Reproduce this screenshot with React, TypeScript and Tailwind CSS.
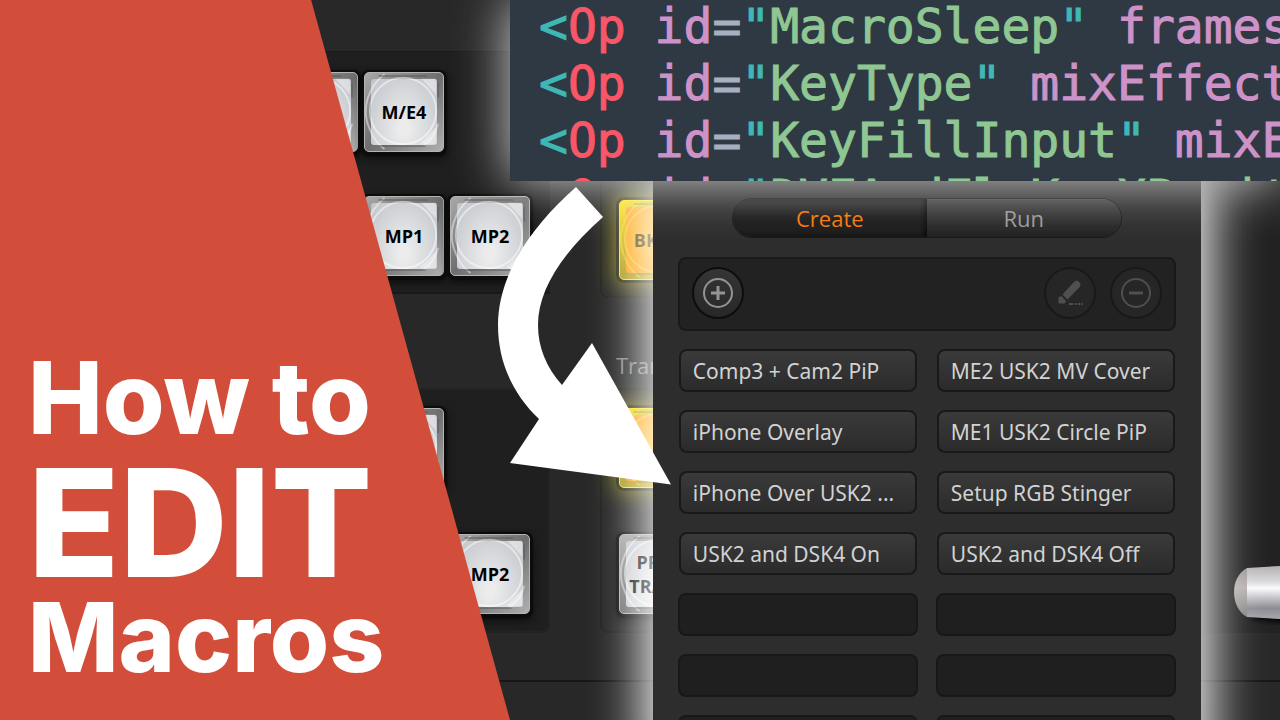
import { Minus, Plus } from "lucide-react";
import type { ReactNode } from "react";

type Token = { text: string; kind: "bracket" | "tag" | "attr" | "equals" | "value" };

const op = (value: string, attr: string): Token[] => [
  { text: "<", kind: "bracket" },
  { text: "Op", kind: "tag" },
  { text: " id", kind: "attr" },
  { text: "=", kind: "equals" },
  { text: '"', kind: "bracket" },
  { text: value, kind: "value" },
  ...(attr
    ? [
        { text: '"', kind: "bracket" as const },
        { text: ` ${attr}`, kind: "attr" as const },
      ]
    : []),
];

const codeLines = [
  op("MacroSleep", "frames"),
  op("KeyType", "mixEffect"),
  op("KeyFillInput", "mixE"),
  op("DVEAndFlyKeyXPosit", ""),
];

const tokenColors = {
  bracket: "text-[#3fb8b5]",
  tag: "text-[#f95668]",
  attr: "text-[#cd93c9]",
  equals: "text-[#a6b0c0]",
  value: "text-[#8fc793]",
};

const macros = [
  "Comp3 + Cam2 PiP",
  "ME2 USK2 MV Cover",
  "iPhone Overlay",
  "ME1 USK2 Circle PiP",
  "iPhone Over USK2 ...",
  "Setup RGB Stinger",
  "USK2 and DSK4 On",
  "USK2 and DSK4 Off",
];

const emptySlots = [1, 2, 3, 4, 5, 6];

function KeyCap({ children, lit = false }: { children?: ReactNode; lit?: boolean }) {
  const frame = lit
    ? "border-[#ffe600] bg-linear-to-br from-[#ffe000] via-[#a89a1e] to-[#ffd400] shadow-[0_0_0_3px_#33301a,0_0_20px_6px_rgba(170,165,20,0.6)]"
    : "border-[#b4b4b4] bg-linear-to-br from-[#a9a9a9] via-[#6e6e6e] to-[#b0b0b0] shadow-[0_1px_1px_3px_#0c0c0c,0_4px_8px_2px_#0c0c0c]";
  const face = lit
    ? "bg-radial from-[#ffc62e] to-[#ff9d14] text-black/70"
    : "bg-radial-[at_50%_75%] from-[#ececed] from-10% to-[#bfc3c8] text-black";

  return (
    <button className={`relative h-20 w-20 shrink-0 rounded-[5px] border p-1.5 ${frame}`}>
      <span
        className={`flex h-full w-full items-center justify-center rounded-[3px] text-lg leading-6 font-bold ${face}`}
      >
        {children}
      </span>
      <svg
        viewBox="0 0 80 80"
        className="pointer-events-none absolute inset-0 h-full w-full"
        fill="none"
        stroke={lit ? "#ffe24a" : "#ffffff"}
      >
        <path
          d="M56 73h17V56zM58 6h15v16z"
          fill={lit ? "#ffd84a" : "#fff"}
          fillOpacity="0.4"
          stroke="none"
        />
        <circle cx="39" cy="39" r="34" strokeWidth="2" strokeOpacity="0.5" />
        <path d="M20 1C4 14-5 36 5 58c3 8 8 15 15 20" strokeWidth="2" strokeOpacity="0.45" />
        <path d="M75 52c-2 9-7 17-15 22" strokeWidth="2" strokeOpacity="0.4" />
        <path
          d="M75 10v15M14 3h50M14 75h48"
          stroke={lit ? "#8c8420" : "#555555"}
          strokeWidth="2"
          strokeOpacity="0.5"
        />
      </svg>
    </button>
  );
}

function SwitcherPanel() {
  return (
    <div className="flex flex-col bg-[#282828] [grid-area:1/1]">
      <div className="h-13 shrink-0 border-b border-[#191919]" />
      <div className="flex shrink-0 gap-[50px]">
        <div className="w-[550px] shrink-0">
          <div className="grid grid-cols-[80px_80px_80px] justify-end gap-x-1.5 gap-y-11 border-b-2 border-[#191919] bg-[#1f1f1f] px-5 pt-5 pb-4">
            <KeyCap>M/E3</KeyCap>
            <KeyCap>M/E4</KeyCap>
            <span />
            <span />
            <KeyCap>MP1</KeyCap>
            <KeyCap>MP2</KeyCap>
          </div>
          <div className="h-[94px]" />
          <div className="grid grid-cols-[80px_80px] justify-end gap-x-1.5 gap-y-[46px] rounded-b-lg border-2 border-[#232323] bg-[#1f1f1f] px-[18px] pt-[18px] pb-[17px]">
            <KeyCap />
            <span />
            <KeyCap />
            <KeyCap>MP2</KeyCap>
          </div>
        </div>

        <div className="w-[250px] shrink-0">
          <div className="flex h-[246px] items-end rounded-b-lg border-2 border-[#212121] bg-[#262626] px-[17px] pb-4">
            <KeyCap lit>BKGD</KeyCap>
          </div>
          <div className="flex h-[90px] items-end px-4 pb-2 text-[22px] leading-[30px] text-[#858585]">
            Transition
          </div>
          <div className="flex flex-col gap-[46px] rounded-lg border-2 border-[#212121] bg-[#262626] px-[17px] pt-[18px] pb-[17px]">
            <KeyCap lit />
            <KeyCap>
              PREV
              <br />
              TRANS
            </KeyCap>
          </div>
        </div>

        <div className="flex flex-1 items-end justify-end bg-[#222222] pb-2">
          <svg width="46" height="64" viewBox="0 0 46 64">
            <defs>
              <linearGradient id="lever" x1="0" y1="0" x2="0" y2="1">
                <stop offset="0" stopColor="#b4b0b3" />
                <stop offset="0.3" stopColor="#dcdadd" />
                <stop offset="0.42" stopColor="#fbfbfc" />
                <stop offset="0.6" stopColor="#c5c4c9" />
                <stop offset="0.8" stopColor="#8d8c92" />
                <stop offset="1" stopColor="#a8a7ae" />
              </linearGradient>
              <linearGradient id="lever-tip" x1="0" y1="0" x2="0" y2="1">
                <stop offset="0" stopColor="#9d9998" />
                <stop offset="0.4" stopColor="#b8b3b2" />
                <stop offset="1" stopColor="#858282" />
              </linearGradient>
              <filter id="lever-shadow" x="-50%" y="-50%" width="200%" height="200%">
                <feGaussianBlur stdDeviation="3" />
              </filter>
            </defs>
            <path d="M16 20h40v42l-38-4z" fill="#000" filter="url(#lever-shadow)" />
            <path d="M13 7l33-2v53l-33-2z" fill="url(#lever)" />
            <path d="M13 7C4 12 0 21 0 31s4 20 13 25z" fill="url(#lever-tip)" />
          </svg>
        </div>
      </div>
      <div className="h-[49px] shrink-0 border-b-2 border-[#161616]" />
    </div>
  );
}

function RoundButton({
  label,
  disabled = false,
  children,
}: {
  label: string;
  disabled?: boolean;
  children: ReactNode;
}) {
  return (
    <button
      aria-label={label}
      disabled={disabled}
      className={`flex h-[52px] w-[52px] items-center justify-center rounded-full border-2 ${
        disabled
          ? "border-[#191919] bg-[#262626] text-[#4f4f4f]"
          : "border-[#0d0d0d] bg-linear-to-b from-[#353535] to-[#282828] text-[#949494]"
      }`}
    >
      {children}
    </button>
  );
}

function MacrosPanel() {
  return (
    <section className="ml-[51%] w-[548px] flex-1 bg-[#2d2d2d] px-[25px] pt-[17px] shadow-[0_0_48px_10px_rgba(255,255,255,0.95)]">
      <div className="mx-auto flex h-10 w-[390px] overflow-hidden rounded-full border border-[#161616] text-[22px] leading-[30px]">
        <button className="flex-1 bg-linear-to-b from-[#2b2b2b] via-[#191919] to-[#1c1c1c] text-[#f57608] shadow-[inset_-3px_0_5px_#0c0c0c]">
          Create
        </button>
        <button className="flex-1 border-t border-[#454545] bg-linear-to-b from-[#3d3d3d] to-[#202020] pb-0.5 text-[#999999]">
          Run
        </button>
      </div>

      <div className="mt-[19px] flex h-[74px] items-center gap-3.5 rounded-lg border-2 border-[#191919] bg-[#222222] px-3 pb-0.5">
        <RoundButton label="Add macro">
          <span className="flex h-[30px] w-[30px] items-center justify-center rounded-full border-2 border-current">
            <Plus size={24} strokeWidth={3} strokeLinecap="butt" />
          </span>
        </RoundButton>
        <div className="flex-1" />
        <RoundButton label="Edit macro" disabled>
          <svg width="26" height="26" viewBox="0 0 26 26" fill="currentColor">
            <path d="M5.500 14.500L17 2a3.800 3.800 0 0 1 5.500 5.200L10.500 19.500z" />
            <path d="M4.300 16L9 21 7.600 23.500H1.500v-6z" />
            <path d="M12 23h4v2h-4zM17.500 23h2v2h-2zM21 23h2v2h-2zM24 23h1.500v2H24z" />
          </svg>
        </RoundButton>
        <RoundButton label="Delete macro" disabled>
          <span className="flex h-[30px] w-[30px] items-center justify-center rounded-full border-2 border-current">
            <Minus size={24} strokeWidth={3} strokeLinecap="butt" />
          </span>
        </RoundButton>
      </div>

      <div className="mt-[18px] grid grid-cols-2 gap-[18px]">
        {macros.map((macro) => (
          <div key={macro} className="h-[43px] px-px">
            <button className="h-full w-full rounded-lg border-2 border-[#191919] bg-linear-to-b from-[#3a3a3a] to-[#2b2b2b] px-3 text-left font-['Noto_Sans',sans-serif] text-[21px] leading-[30px] whitespace-nowrap text-[#d2d2d2]">
              {macro}
            </button>
          </div>
        ))}
        {emptySlots.map((slot) => (
          <div key={slot} className="h-[43px] rounded-lg border-2 border-[#181818] bg-[#1f1f1f]" />
        ))}
      </div>
    </section>
  );
}

function CodePanel() {
  return (
    <pre className="relative z-10 ml-[510px] h-[181px] shrink-0 overflow-hidden bg-[#2f3943] pl-[29px] font-['DejaVu_Sans_Mono',monospace] text-5xl leading-[57px] shadow-[0_0_50px_rgba(255,255,255,0.8)] [-webkit-text-stroke:1px]">
      <code className="-mt-0.5 block font-[inherit]">
        {codeLines.map((tokens, line) => (
          <span key={line} className="block">
            {tokens.map((token, i) => (
              <span key={i} className={tokenColors[token.kind]}>
                {token.text}
              </span>
            ))}
          </span>
        ))}
      </code>
    </pre>
  );
}

export default function App() {
  return (
    <main className="relative grid h-screen grid-cols-[minmax(0,1fr)] grid-rows-[minmax(0,1fr)] overflow-hidden bg-[#282828] font-['Open_Sans','Noto_Sans',sans-serif]">
      <SwitcherPanel />

      <div className="relative flex min-h-0 flex-col [grid-area:1/1]">
        <CodePanel />
        <MacrosPanel />
      </div>

      <div className="relative flex w-[510px] flex-col justify-end bg-[#d24e3b] pb-[42px] pl-7 [clip-path:polygon(0_0,61%_0,100%_100%,0_100%)] [grid-area:1/1]">
        <h1 className="font-['Inter',sans-serif] text-[96px] leading-[82px] font-extrabold text-white">
          <span className="block text-[100px] leading-[104px]">How to</span>
          <span className="block text-[150px] leading-[146px]">EDIT</span>
          <span className="block">Macros</span>
        </h1>
      </div>

      <svg
        className="absolute top-[187px] left-[498px] z-20"
        width="173"
        height="298"
        viewBox="498 187 173 298"
        fill="#fff"
      >
        <path d="M576 187C525 232 498 280 498 325c0 36 14 68 41 94l-29 44 161 21.500L592 343l-30 42c-16-18-24-38-24-60 0-35 24-72 65-108z" />
      </svg>
    </main>
  );
}
